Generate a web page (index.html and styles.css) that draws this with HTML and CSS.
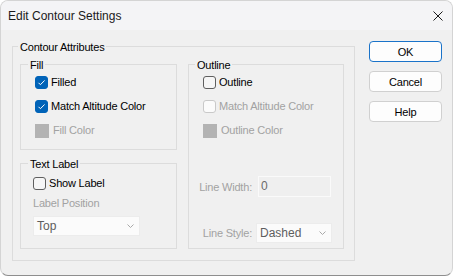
FILE: index.html
```html
<!DOCTYPE html>
<html lang="en">
<head>
<meta charset="utf-8">
<title>Edit Contour Settings</title>
<link rel="stylesheet" href="styles.css">
</head>
<body>
<div class="window">
  <header class="titlebar">
    <span class="title">Edit Contour Settings</span>
    <svg class="close" width="10" height="10" viewBox="0 0 10 10"><path d="M0.5 0.5L9.5 9.5M9.5 0.5L0.5 9.5" stroke="#1b1b1b" stroke-width="1" fill="none"/></svg>
  </header>
  <main class="content">
    <fieldset class="group outer">
      <legend>Contour Attributes</legend>
      <div class="columns">
        <div class="col-left">
          <fieldset class="group fill">
            <legend>Fill</legend>
            <div class="rows">
              <div class="check"><span class="box checked"><svg width="13" height="13" viewBox="0 0 13 13"><path d="M3.5 6.8L5.4 8.7L9.6 4.5" stroke="#fff" stroke-width="1" fill="none"/></svg></span>Filled</div>
              <div class="check"><span class="box checked"><svg width="13" height="13" viewBox="0 0 13 13"><path d="M3.5 6.8L5.4 8.7L9.6 4.5" stroke="#fff" stroke-width="1" fill="none"/></svg></span>Match Altitude Color</div>
              <div class="check disabled"><span class="swatch"></span>Fill Color</div>
            </div>
          </fieldset>
          <fieldset class="group textlabel">
            <legend>Text Label</legend>
            <div class="check"><span class="box"></span>Show Label</div>
            <div class="caption disabled">Label Position</div>
            <div class="combo wide"><span>Top</span><svg width="7" height="4" viewBox="0 0 7 4"><path d="M0.5 0.5L3.5 3.5L6.5 0.5" stroke="#a9a9a9" stroke-width="1" fill="none"/></svg></div>
          </fieldset>
        </div>
        <fieldset class="group outline">
          <legend>Outline</legend>
          <div class="rows">
            <div class="check"><span class="box"></span>Outline</div>
            <div class="check disabled"><span class="box off"></span>Match Altitude Color</div>
            <div class="check disabled"><span class="swatch"></span>Outline Color</div>
          </div>
          <div class="field-row width-row">
            <span class="field-label disabled">Line Width:</span>
            <div class="textbox">0</div>
          </div>
          <div class="field-row style-row">
            <span class="field-label disabled">Line Style:</span>
            <div class="combo narrow"><span>Dashed</span><svg width="7" height="4" viewBox="0 0 7 4"><path d="M0.5 0.5L3.5 3.5L6.5 0.5" stroke="#a9a9a9" stroke-width="1" fill="none"/></svg></div>
          </div>
        </fieldset>
      </div>
    </fieldset>
    <div class="buttons">
      <button class="btn default">OK</button>
      <button class="btn">Cancel</button>
      <button class="btn">Help</button>
    </div>
  </main>
</div>
</body>
</html>
```
FILE: styles.css
```css
* { box-sizing: border-box; }
html, body { margin: 0; padding: 0; background: #ffffff; }
body {
  width: 453px;
  height: 276px;
  font-family: "Liberation Sans", Arial, sans-serif;
  font-size: 11px;
  letter-spacing: -0.2px;
  color: #000;
}
.window {
  width: 453px;
  height: 276px;
  background: #f0f0f0;
  border: 1px solid #d4d4d4;
  border-bottom-color: #8e8e8e;
  border-radius: 8px;
  overflow: hidden;
  display: flex;
  flex-direction: column;
}
.titlebar {
  height: 29px;
  flex: none;
  background: #f4f4f6;
  display: flex;
  align-items: center;
  justify-content: space-between;
  padding: 0 9px 0 7px;
}
.title {
  font-size: 12px;
  letter-spacing: 0;
  color: #1a1a1a;
  line-height: 30px;
}
.close { display: block; margin-top: 1px; }
.content {
  flex: 1;
  display: flex;
  align-items: flex-start;
  padding: 8px 0 0 11px;
}
.group {
  margin: 0;
  border: 1px solid #dcdcdc;
  min-width: 0;
}
.group > legend {
  padding: 3px 2px 0;
  line-height: 13px;
  font-size: 11px;
}
.outer {
  width: 343px;
  height: 223px;
  padding: 2px 10px 0 7px;
}
.outer > legend { margin-left: -2px; }
.columns {
  display: flex;
  gap: 11px;
}
.col-left {
  width: 157px;
  display: flex;
  flex-direction: column;
  gap: 5px;
}
.fill {
  height: 94px;
  padding: 4px 0 0 14px;
}
.fill > legend { margin-left: -7px; }
.textlabel {
  height: 94px;
  padding: 6px 0 0 12px;
}
.textlabel > legend { margin-left: -5px; }
.outline {
  width: 156px;
  height: 193px;
  padding: 4px 0 0 14px;
}
.outline > legend { margin-left: -8px; }
.rows {
  display: flex;
  flex-direction: column;
  gap: 11px;
}
.check {
  height: 13px;
  display: flex;
  align-items: center;
  gap: 3px;
  white-space: nowrap;
  line-height: 13px;
}
.box {
  width: 13px;
  height: 13px;
  flex: none;
  border: 1px solid #5f5f5f;
  border-radius: 3px;
  background: #f6f6f6;
  display: block;
  position: relative;
}
.box.checked {
  background: #0063b8;
  border-color: #0063b8;
}
.box.checked svg { display: block; margin: -1px 0 0 -1px; }
.box.off {
  border-color: #c9c9c9;
  background: #fbfbfb;
}
.swatch {
  width: 14px;
  height: 14px;
  flex: none;
  background: #b3b3b3;
  margin-right: 1px;
}
.disabled { color: #a2a2a2; }
.caption {
  line-height: 13px;
  margin-top: 7px;
  white-space: nowrap;
}
.combo {
  height: 20px;
  background: #fbfbfb;
  border: 1px solid #ececec;
  display: flex;
  align-items: center;
  justify-content: space-between;
  padding: 0 5px 0 3px;
  color: #5e5e5e;
  font-size: 12px;
  letter-spacing: 0;
}
.combo svg { display: block; }
.combo.wide {
  width: 107px;
  margin-top: 6px;
}
.combo.narrow { width: 76px; }
.field-row {
  display: flex;
  align-items: center;
  margin-left: -14px;
}
.field-label {
  width: 63px;
  text-align: right;
  white-space: nowrap;
  flex: none;
}
.width-row { margin-top: 39px; }
.style-row { margin-top: 26px; }
.textbox {
  width: 73px;
  height: 21px;
  margin-left: 6px;
  border: 1px solid #fafafa;
  background: #efefef;
  color: #6a6a6a;
  font-size: 12px;
  letter-spacing: 0;
  line-height: 19px;
  padding-left: 2px;
}
.combo.narrow { margin-left: 4px; }
.buttons {
  display: flex;
  flex-direction: column;
  gap: 9px;
  margin: 3px 0 0 14px;
}
.btn {
  width: 73px;
  height: 21px;
  margin: 0;
  padding: 0;
  background: #fdfdfd;
  border: 1px solid #d0d0d0;
  border-radius: 4px;
  font-family: "Liberation Sans", Arial, sans-serif;
  font-size: 11px;
  letter-spacing: -0.2px;
  color: #000;
}
.btn.default { border-color: #1a73c9; }
```
